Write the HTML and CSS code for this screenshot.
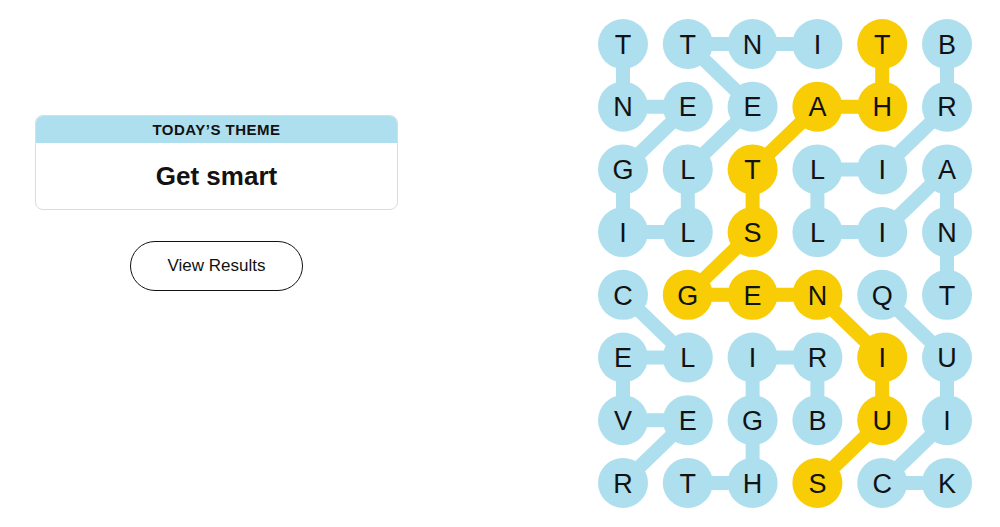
FILE: index.html
```html
<!DOCTYPE html>
<html lang="en">
<head>
<meta charset="utf-8">
<title>Strands</title>
<link rel="stylesheet" href="styles.css">
</head>
<body>
<main class="page">
  <section class="left">
    <div class="theme-card">
      <div class="theme-head">Today’s Theme</div>
      <div class="theme-body">Get smart</div>
    </div>
    <button class="results-btn" type="button">View Results</button>
  </section>
  <section class="board">
    <svg class="board-svg" width="374" height="489" viewBox="0 0 374 489">
      <g class="links blue">
        <polyline points="219.4,25 154.6,25 89.8,25 154.6,87.7 89.8,150.4 89.8,213.1 25,213.1 25,150.4 89.8,87.7 25,87.7 25,25"/>
        <polyline points="349,25 349,87.7 284.2,150.4 219.4,150.4 219.4,213.1 284.2,213.1 349,150.4 349,213.1 349,275.8"/>
        <polyline points="25,275.8 89.8,338.5 25,338.5 25,401.2 89.8,401.2 25,463.9"/>
        <polyline points="284.2,275.8 349,338.5 349,401.2 284.2,463.9 349,463.9"/>
        <polyline points="219.4,401.2 219.4,338.5 154.6,338.5 154.6,401.2 154.6,463.9 89.8,463.9"/>
      </g>
      <g class="links gold">
        <polyline points="284.2,25 284.2,87.7 219.4,87.7 154.6,150.4 154.6,213.1 89.8,275.8 154.6,275.8 219.4,275.8 284.2,338.5 284.2,401.2 219.4,463.9"/>
      </g>
      <g class="dots blue">
        <circle cx="25" cy="25" r="25"/><circle cx="89.8" cy="25" r="25"/><circle cx="154.6" cy="25" r="25"/><circle cx="219.4" cy="25" r="25"/><circle cx="349" cy="25" r="25"/>
        <circle cx="25" cy="87.7" r="25"/><circle cx="89.8" cy="87.7" r="25"/><circle cx="154.6" cy="87.7" r="25"/><circle cx="349" cy="87.7" r="25"/>
        <circle cx="25" cy="150.4" r="25"/><circle cx="89.8" cy="150.4" r="25"/><circle cx="219.4" cy="150.4" r="25"/><circle cx="284.2" cy="150.4" r="25"/><circle cx="349" cy="150.4" r="25"/>
        <circle cx="25" cy="213.1" r="25"/><circle cx="89.8" cy="213.1" r="25"/><circle cx="219.4" cy="213.1" r="25"/><circle cx="284.2" cy="213.1" r="25"/><circle cx="349" cy="213.1" r="25"/>
        <circle cx="25" cy="275.8" r="25"/><circle cx="284.2" cy="275.8" r="25"/><circle cx="349" cy="275.8" r="25"/>
        <circle cx="25" cy="338.5" r="25"/><circle cx="89.8" cy="338.5" r="25"/><circle cx="154.6" cy="338.5" r="25"/><circle cx="219.4" cy="338.5" r="25"/><circle cx="349" cy="338.5" r="25"/>
        <circle cx="25" cy="401.2" r="25"/><circle cx="89.8" cy="401.2" r="25"/><circle cx="154.6" cy="401.2" r="25"/><circle cx="219.4" cy="401.2" r="25"/><circle cx="349" cy="401.2" r="25"/>
        <circle cx="25" cy="463.9" r="25"/><circle cx="89.8" cy="463.9" r="25"/><circle cx="154.6" cy="463.9" r="25"/><circle cx="284.2" cy="463.9" r="25"/><circle cx="349" cy="463.9" r="25"/>
      </g>
      <g class="dots gold">
        <circle cx="284.2" cy="25" r="25"/>
        <circle cx="219.4" cy="87.7" r="25"/><circle cx="284.2" cy="87.7" r="25"/>
        <circle cx="154.6" cy="150.4" r="25"/>
        <circle cx="154.6" cy="213.1" r="25"/>
        <circle cx="89.8" cy="275.8" r="25"/><circle cx="154.6" cy="275.8" r="25"/><circle cx="219.4" cy="275.8" r="25"/>
        <circle cx="284.2" cy="338.5" r="25"/>
        <circle cx="284.2" cy="401.2" r="25"/>
        <circle cx="219.4" cy="463.9" r="25"/>
      </g>
      <g class="letters">
        <text x="25" y="34.7">T</text><text x="89.8" y="34.7">T</text><text x="154.6" y="34.7">N</text><text x="219.4" y="34.7">I</text><text x="284.2" y="34.7">T</text><text x="349" y="34.7">B</text>
        <text x="25" y="97.4">N</text><text x="89.8" y="97.4">E</text><text x="154.6" y="97.4">E</text><text x="219.4" y="97.4">A</text><text x="284.2" y="97.4">H</text><text x="349" y="97.4">R</text>
        <text x="25" y="160.1">G</text><text x="89.8" y="160.1">L</text><text x="154.6" y="160.1">T</text><text x="219.4" y="160.1">L</text><text x="284.2" y="160.1">I</text><text x="349" y="160.1">A</text>
        <text x="25" y="222.8">I</text><text x="89.8" y="222.8">L</text><text x="154.6" y="222.8">S</text><text x="219.4" y="222.8">L</text><text x="284.2" y="222.8">I</text><text x="349" y="222.8">N</text>
        <text x="25" y="285.5">C</text><text x="89.8" y="285.5">G</text><text x="154.6" y="285.5">E</text><text x="219.4" y="285.5">N</text><text x="284.2" y="285.5">Q</text><text x="349" y="285.5">T</text>
        <text x="25" y="348.2">E</text><text x="89.8" y="348.2">L</text><text x="154.6" y="348.2">I</text><text x="219.4" y="348.2">R</text><text x="284.2" y="348.2">I</text><text x="349" y="348.2">U</text>
        <text x="25" y="410.9">V</text><text x="89.8" y="410.9">E</text><text x="154.6" y="410.9">G</text><text x="219.4" y="410.9">B</text><text x="284.2" y="410.9">U</text><text x="349" y="410.9">I</text>
        <text x="25" y="473.6">R</text><text x="89.8" y="473.6">T</text><text x="154.6" y="473.6">H</text><text x="219.4" y="473.6">S</text><text x="284.2" y="473.6">C</text><text x="349" y="473.6">K</text>
      </g>
    </svg>
  </section>
</main>
</body>
</html>
```

FILE: styles.css
```css
html, body {
  margin: 0;
  padding: 0;
  background: #ffffff;
}

body {
  font-family: "Liberation Sans", Arial, sans-serif;
  color: #121212;
}

.page {
  display: flex;
  align-items: flex-start;
  padding: 19px 0 0 35px;
}

.left {
  width: 363px;
  margin-top: 96px;
  display: flex;
  flex-direction: column;
  align-items: center;
}

.theme-card {
  width: 100%;
  box-sizing: border-box;
  border: 1px solid #dcdcdc;
  border-radius: 8px;
  overflow: hidden;
  background: #ffffff;
}

.theme-head {
  height: 27px;
  background: #aedfee;
  display: flex;
  align-items: center;
  justify-content: center;
  font-size: 15px;
  font-weight: 700;
  letter-spacing: 0.5px;
  text-transform: uppercase;
  color: #121212;
}

.theme-body {
  height: 66px;
  display: flex;
  align-items: center;
  justify-content: center;
  font-size: 26px;
  font-weight: 700;
  color: #121212;
}

.results-btn {
  margin-top: 31px;
  width: 173px;
  height: 50px;
  border: 1px solid #121212;
  border-radius: 25px;
  background: #ffffff;
  font-family: "Liberation Sans", Arial, sans-serif;
  font-size: 17px;
  color: #121212;
  padding: 0;
}

.board {
  margin-left: 200px;
}

.board-svg {
  display: block;
}

.links polyline {
  fill: none;
  stroke-width: 14;
  stroke-linejoin: round;
}

.links.blue polyline {
  stroke: #aedfee;
}

.links.gold polyline {
  stroke: #f8cd05;
}

.dots.blue circle {
  fill: #aedfee;
}

.dots.gold circle {
  fill: #f8cd05;
}

.letters text {
  font-family: "Liberation Sans", Arial, sans-serif;
  font-size: 27px;
  fill: #121212;
  text-anchor: middle;
}
```
